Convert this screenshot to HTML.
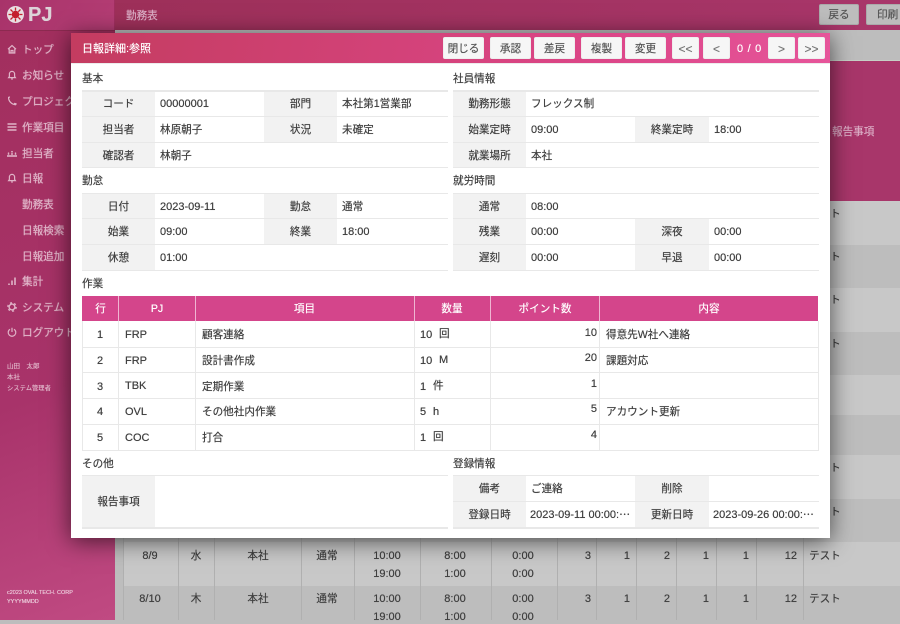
<!DOCTYPE html>
<html lang="ja"><head><meta charset="utf-8"><title>日報詳細</title>
<style>
html,body{margin:0;padding:0}
body{width:900px;height:620px;overflow:hidden;position:relative;background:#bdbdbd;font-family:"Liberation Sans","Noto Sans CJK JP",sans-serif;font-size:10.6px;color:#404040;text-shadow:0 0 .4px currentColor}
div,span{box-sizing:border-box}
.a{position:absolute;white-space:nowrap}
#top{left:0;top:0;width:900px;height:30px;background:linear-gradient(90deg,#9c2f57,#a8366a)}
#logo{left:0;top:0;width:115px;height:30px;background:linear-gradient(120deg,#a8336a,#b43d74);border-right:1px solid #a02f5f}
#side{left:0;top:30px;width:115px;height:590px;background:linear-gradient(160deg,#a22f5e 0%,#a8336a 60%,#c04a82 100%);border-top:1px solid #8c2a50}
.m{left:22px;height:14px;line-height:14px;color:#e0b4c8;font-size:10.6px;margin-top:1px;text-shadow:0 0 .7px currentColor}
.ic{position:absolute;left:7px;width:10px;height:10px;fill:none;stroke:#e0b4c8;stroke-width:1.2}
.tb{background:#bdbdbd;border:1px solid #aaa;border-radius:2px;color:#555;text-align:center;top:4px;height:21px;line-height:20px;font-size:10.6px}
.bar{background:#bdbdbd;left:115px;top:30px;width:785px;height:31px;border-bottom:1px solid #c6d0c6}
.ph{left:115px;top:61px;width:785px;height:141px;background:#a8366a;border-bottom:1px solid #c9c9c9}
.rw{left:124px;width:776px}
.li{background:#c8c8c8}.dk{background:#bdbdbd}
.vl{width:1px;top:499px;height:121px;background:#b0b0b0}
.t{line-height:14px;height:14px;color:#404040;margin-top:1px}
.n{font-size:11px}
.cn{text-align:center;transform:translateX(-50%)}
.rt{text-align:right;transform:translateX(-100%)}
#modal{left:71px;top:33px;width:759px;height:505px;background:#fff;box-shadow:0 3px 22px rgba(0,0,0,.62)}
#mh{left:71px;top:33px;width:759px;height:31px;background:linear-gradient(100deg,#c43c60,#dc4688 70%,#e6559a);border-bottom:1px solid #ececec;color:#fff}
.b{top:37px;height:22px;line-height:22px;background:#f6f6f6;border:1px solid #eee;border-radius:2px;text-align:center;color:#555;font-size:10.6px}
.ar{font-size:12px;color:#777}
.sec{height:14px;line-height:14px;color:#404040;margin-top:1px}
.hl{height:1px;background:#e8e8e8;width:366px}
.lb{background:#f2f2f2;text-align:center;color:#404040;padding-top:1px}
.vv{padding-left:5px;padding-top:1px;color:#404040}
.cell{overflow:hidden}
.th{background:#d4458b;color:#fff;text-align:center;top:296px;height:25px;line-height:25px;padding-top:1px}
.tv{width:1px;background:#e8e8e8;top:321px;height:130px}
.th2{width:1px;background:#efb6d2;top:296px;height:25px}
.tl{height:1px;background:#e8e8e8;left:82px;width:737px}
</style></head><body>
<div class="a" id="top"></div>
<div class="a bar"></div>
<div class="a ph"></div>
<div class="a" style="left:832px;top:125px;height:14px;line-height:14px;color:#dcaec6">報告事項</div>
<div class="a" id="side"></div>
<div class="a" id="logo"></div>
<svg class="a" style="left:6px;top:5px" width="19" height="19" viewBox="0 0 19 19"><circle cx="9.5" cy="9.5" r="8.5" fill="#e8dfe2"/><circle cx="9.5" cy="9.5" r="3.8" fill="#c4202c"/><g stroke="#c4202c" stroke-width="1.3"><path d="M9.5 2.5v3M9.5 13.5v3M2.5 9.5h3M13.5 9.5h3M4.5 4.5l2.2 2.2M12.3 12.3l2.2 2.2M14.5 4.5l-2.2 2.2M6.7 12.3l-2.2 2.2"/></g></svg>
<div class="a" style="left:28px;top:3px;height:24px;line-height:24px;font-size:20px;font-weight:bold;color:#dcd3d8">PJ</div>
<div class="a" style="left:126px;top:9px;height:14px;line-height:14px;color:#dcaec6">勤務表</div>
<div class="a tb" style="left:819px;width:40px">戻る</div>
<div class="a tb" style="left:866px;width:44px;text-align:left;padding-left:10px">印刷</div>

<!-- sidebar -->
<svg class="ic" style="top:44px" viewBox="0 0 10 10"><path d="M1 5.2L5 1.6l4 3.6M2.2 4.6V9h5.6V4.6M4 9V6.5h2V9"/></svg>
<div class="a m" style="top:42px">トップ</div>
<svg class="ic" style="top:70px" viewBox="0 0 10 10"><path d="M1.6 7.6h6.8L7.600 6.400V4a2.600 2.600 0 0 0-5.200 0v2.400zM4.200 9h1.600"/></svg>
<div class="a m" style="top:68px">お知らせ</div>
<svg class="ic" style="top:96px" viewBox="0 0 10 10"><path d="M1.600 1c-.4 4 3 7.600 7.400 7.800M1.600 1l1.400.2M7 7.400l2 .4v1"/></svg>
<div class="a m" style="top:94px">プロジェク</div>
<svg class="ic" style="top:122px;stroke-width:1.500" viewBox="0 0 10 10"><path d="M.5 2h9M.5 5h9M.5 8h9"/></svg>
<div class="a m" style="top:120px">作業項目</div>
<svg class="ic" style="top:148px" viewBox="0 0 10 10"><circle cx="1.500" cy="5.200" r=".8" fill="#e0b4c8" stroke="none"/><circle cx="5" cy="3.800" r=".9" fill="#e0b4c8" stroke="none"/><circle cx="8.500" cy="5.200" r=".8" fill="#e0b4c8" stroke="none"/><path d="M0 8h10" stroke-width="1.600"/><path d="M1.500 7V6.200M5 7V5M8.500 7V6.200" stroke-width="1.400"/></svg>
<div class="a m" style="top:146px">担当者</div>
<svg class="ic" style="top:173px" viewBox="0 0 10 10"><path d="M1.600 7.600h6.800L7.600 6.400V4a2.600 2.600 0 0 0-5.200 0v2.400zM4.200 9h1.600"/></svg>
<div class="a m" style="top:171px">日報</div>
<div class="a m" style="top:197px">勤務表</div>
<div class="a m" style="top:223px">日報検索</div>
<div class="a m" style="top:249px">日報追加</div>
<svg class="ic" style="top:276px;stroke-width:1.600" viewBox="0 0 10 10"><path d="M2 9V7.500M5 9V4.500M8 9V1.500"/></svg>
<div class="a m" style="top:274px">集計</div>
<svg class="ic" style="top:302px" viewBox="0 0 10 10"><circle cx="5" cy="5" r="2.900" stroke-width="1.400"/><circle cx="5" cy="5" r="4.200" stroke-width="1.300" stroke-dasharray="2 2.400"/></svg>
<div class="a m" style="top:300px">システム</div>
<svg class="ic" style="top:327px" viewBox="0 0 10 10"><path d="M3 2.200a3.800 3.800 0 1 0 4 0M5 .8V5"/></svg>
<div class="a m" style="top:325px">ログアウト</div>
<div class="a" style="left:7px;top:363px;font-size:6.500px;line-height:8px;color:#e0b4c8">山田　太郎</div>
<div class="a" style="left:7px;top:374px;font-size:6.500px;line-height:8px;color:#e0b4c8">本社</div>
<div class="a" style="left:7px;top:385px;font-size:6.300px;line-height:8px;color:#e0b4c8">システム管理者</div>
<div class="a" style="left:7px;top:589px;font-size:5.500px;line-height:8px;color:#eccbdb">c2023 OVAL TECH. CORP</div>
<div class="a" style="left:7px;top:598px;font-size:5.500px;line-height:8px;color:#eccbdb">YYYYMMDD</div>

<!-- background rows -->
<div class="a rw li" style="top:202px;height:43px;left:830px;width:70px"></div>
<div class="a rw dk" style="top:245px;height:43px;left:830px;width:70px"></div>
<div class="a rw li" style="top:288px;height:44px;left:830px;width:70px"></div>
<div class="a rw dk" style="top:332px;height:43px;left:830px;width:70px"></div>
<div class="a rw li" style="top:375px;height:40px;left:830px;width:70px"></div>
<div class="a rw dk" style="top:415px;height:40px;left:830px;width:70px"></div>
<div class="a rw li" style="top:455px;height:44px;left:830px;width:70px"></div>
<div class="a rw dk" style="top:499px;height:43px"></div>
<div class="a rw li" style="top:542px;height:44px"></div>
<div class="a rw dk" style="top:586px;height:34px"></div>
<div class="a vl" style="left:123px"></div><div class="a vl" style="left:178px"></div><div class="a vl" style="left:214px"></div><div class="a vl" style="left:301px"></div><div class="a vl" style="left:354px"></div><div class="a vl" style="left:420px"></div><div class="a vl" style="left:491px"></div><div class="a vl" style="left:557px"></div><div class="a vl" style="left:596px"></div><div class="a vl" style="left:636px"></div><div class="a vl" style="left:676px"></div><div class="a vl" style="left:716px"></div><div class="a vl" style="left:756px"></div><div class="a vl" style="left:803px"></div>

<div class="a t" style="left:809px;top:206px">テスト</div>
<div class="a t" style="left:809px;top:249px">テスト</div>
<div class="a t" style="left:809px;top:292px">テスト</div>
<div class="a t" style="left:809px;top:336px">テスト</div>
<div class="a t" style="left:809px;top:460px">テスト</div>
<div class="a t" style="left:809px;top:504px">テスト</div>

<div class="a t n cn" style="left:150px;top:548px">8/9</div><div class="a t cn" style="left:196px;top:548px">水</div><div class="a t cn" style="left:258px;top:548px">本社</div><div class="a t cn" style="left:327px;top:548px">通常</div>
<div class="a t n cn" style="left:387px;top:548px">10:00</div><div class="a t n cn" style="left:387px;top:566px">19:00</div><div class="a t n cn" style="left:455px;top:548px">8:00</div><div class="a t n cn" style="left:455px;top:566px">1:00</div><div class="a t n cn" style="left:523px;top:548px">0:00</div><div class="a t n cn" style="left:523px;top:566px">0:00</div>
<div class="a t n rt" style="left:591px;top:548px">3</div><div class="a t n rt" style="left:630px;top:548px">1</div><div class="a t n rt" style="left:670px;top:548px">2</div><div class="a t n rt" style="left:709px;top:548px">1</div><div class="a t n rt" style="left:749px;top:548px">1</div><div class="a t n rt" style="left:797px;top:548px">12</div><div class="a t" style="left:809px;top:548px">テスト</div>
<div class="a t n cn" style="left:150px;top:591px">8/10</div><div class="a t cn" style="left:196px;top:591px">木</div><div class="a t cn" style="left:258px;top:591px">本社</div><div class="a t cn" style="left:327px;top:591px">通常</div>
<div class="a t n cn" style="left:387px;top:591px">10:00</div><div class="a t n cn" style="left:387px;top:609px">19:00</div><div class="a t n cn" style="left:455px;top:591px">8:00</div><div class="a t n cn" style="left:455px;top:609px">1:00</div><div class="a t n cn" style="left:523px;top:591px">0:00</div><div class="a t n cn" style="left:523px;top:609px">0:00</div>
<div class="a t n rt" style="left:591px;top:591px">3</div><div class="a t n rt" style="left:630px;top:591px">1</div><div class="a t n rt" style="left:670px;top:591px">2</div><div class="a t n rt" style="left:709px;top:591px">1</div><div class="a t n rt" style="left:749px;top:591px">1</div><div class="a t n rt" style="left:797px;top:591px">12</div><div class="a t" style="left:809px;top:591px">テスト</div>

<!-- modal -->
<div class="a" id="modal"></div>
<div class="a" id="mh"></div>
<div class="a" style="left:82px;top:42px;height:14px;line-height:14px;color:#fff;font-size:11px">日報詳細:参照</div>
<div class="a b" style="left:443px;width:41px">閉じる</div>
<div class="a b" style="left:490px;width:41px">承認</div>
<div class="a b" style="left:534px;width:41px">差戻</div>
<div class="a b" style="left:581px;width:41px">複製</div>
<div class="a b" style="left:625px;width:41px">変更</div>
<div class="a b ar" style="left:672px;width:27px">&lt;&lt;</div>
<div class="a b ar" style="left:703px;width:27px">&lt;</div>
<div class="a n" style="left:737px;top:42px;height:14px;line-height:14px;color:#fff;letter-spacing:.7px">0 / 0</div>
<div class="a b ar" style="left:768px;width:27px">&gt;</div>
<div class="a b ar" style="left:798px;width:27px">&gt;&gt;</div>

<!-- left blocks -->
<div class="a sec" style="left:82px;top:71px">基本</div>
<div class="a lb" style="left:82px;top:91px;width:73px;height:25px;line-height:25px">コード</div><div class="a vv n" style="left:155px;top:91px;height:25px;line-height:25px">00000001</div><div class="a lb" style="left:264px;top:91px;width:73px;height:25px;line-height:25px">部門</div><div class="a vv" style="left:337px;top:91px;height:25px;line-height:25px">本社第1営業部</div>
<div class="a lb" style="left:82px;top:117px;width:73px;height:25px;line-height:25px">担当者</div><div class="a vv" style="left:155px;top:117px;height:25px;line-height:25px">林原朝子</div><div class="a lb" style="left:264px;top:117px;width:73px;height:25px;line-height:25px">状況</div><div class="a vv" style="left:337px;top:117px;height:25px;line-height:25px">未確定</div>
<div class="a lb" style="left:82px;top:143px;width:73px;height:24px;line-height:24px">確認者</div><div class="a vv" style="left:155px;top:143px;height:24px;line-height:24px">林朝子</div>
<div class="a hl" style="left:82px;top:90px;height:2px"></div><div class="a hl" style="left:82px;top:116px"></div><div class="a hl" style="left:82px;top:142px"></div><div class="a hl" style="left:82px;top:167px"></div>

<div class="a sec" style="left:82px;top:173px">勤怠</div>
<div class="a lb" style="left:82px;top:194px;width:73px;height:24px;line-height:24px">日付</div><div class="a vv n" style="left:155px;top:194px;height:24px;line-height:24px">2023-09-11</div><div class="a lb" style="left:264px;top:194px;width:73px;height:24px;line-height:24px">勤怠</div><div class="a vv" style="left:337px;top:194px;height:24px;line-height:24px">通常</div>
<div class="a lb" style="left:82px;top:219px;width:73px;height:25px;line-height:25px">始業</div><div class="a vv n" style="left:155px;top:219px;height:25px;line-height:25px">09:00</div><div class="a lb" style="left:264px;top:219px;width:73px;height:25px;line-height:25px">終業</div><div class="a vv n" style="left:337px;top:219px;height:25px;line-height:25px">18:00</div>
<div class="a lb" style="left:82px;top:245px;width:73px;height:25px;line-height:25px">休憩</div><div class="a vv n" style="left:155px;top:245px;height:25px;line-height:25px">01:00</div>
<div class="a hl" style="left:82px;top:193px"></div><div class="a hl" style="left:82px;top:218px"></div><div class="a hl" style="left:82px;top:244px"></div><div class="a hl" style="left:82px;top:270px"></div>

<!-- right blocks -->
<div class="a sec" style="left:453px;top:71px">社員情報</div>
<div class="a lb" style="left:453px;top:91px;width:73px;height:25px;line-height:25px">勤務形態</div><div class="a vv" style="left:526px;top:91px;height:25px;line-height:25px">フレックス制</div>
<div class="a lb" style="left:453px;top:117px;width:73px;height:25px;line-height:25px">始業定時</div><div class="a vv n" style="left:526px;top:117px;height:25px;line-height:25px">09:00</div><div class="a lb" style="left:635px;top:117px;width:74px;height:25px;line-height:25px">終業定時</div><div class="a vv n" style="left:709px;top:117px;height:25px;line-height:25px">18:00</div>
<div class="a lb" style="left:453px;top:143px;width:73px;height:24px;line-height:24px">就業場所</div><div class="a vv" style="left:526px;top:143px;height:24px;line-height:24px">本社</div>
<div class="a hl" style="left:453px;top:90px;height:2px"></div><div class="a hl" style="left:453px;top:116px"></div><div class="a hl" style="left:453px;top:142px"></div><div class="a hl" style="left:453px;top:167px"></div>

<div class="a sec" style="left:453px;top:173px">就労時間</div>
<div class="a lb" style="left:453px;top:194px;width:73px;height:24px;line-height:24px">通常</div><div class="a vv n" style="left:526px;top:194px;height:24px;line-height:24px">08:00</div>
<div class="a lb" style="left:453px;top:219px;width:73px;height:25px;line-height:25px">残業</div><div class="a vv n" style="left:526px;top:219px;height:25px;line-height:25px">00:00</div><div class="a lb" style="left:635px;top:219px;width:74px;height:25px;line-height:25px">深夜</div><div class="a vv n" style="left:709px;top:219px;height:25px;line-height:25px">00:00</div>
<div class="a lb" style="left:453px;top:245px;width:73px;height:25px;line-height:25px">遅刻</div><div class="a vv n" style="left:526px;top:245px;height:25px;line-height:25px">00:00</div><div class="a lb" style="left:635px;top:245px;width:74px;height:25px;line-height:25px">早退</div><div class="a vv n" style="left:709px;top:245px;height:25px;line-height:25px">00:00</div>
<div class="a hl" style="left:453px;top:193px"></div><div class="a hl" style="left:453px;top:218px"></div><div class="a hl" style="left:453px;top:244px"></div><div class="a hl" style="left:453px;top:270px"></div>

<!-- work table -->
<div class="a sec" style="left:82px;top:276px">作業</div>
<div class="a th" style="left:82px;width:37px">行</div>
<div class="a th" style="left:119px;width:76px">PJ</div>
<div class="a th" style="left:195px;width:219px">項目</div>
<div class="a th" style="left:414px;width:76px">数量</div>
<div class="a th" style="left:490px;width:110px">ポイント数</div>
<div class="a th" style="left:600px;width:218px">内容</div>
<div class="a th2" style="left:118px"></div><div class="a th2" style="left:195px"></div><div class="a th2" style="left:414px"></div><div class="a th2" style="left:490px"></div><div class="a th2" style="left:599px"></div>
<div class="a tv" style="left:82px"></div><div class="a tv" style="left:118px"></div><div class="a tv" style="left:195px"></div><div class="a tv" style="left:414px"></div><div class="a tv" style="left:490px"></div><div class="a tv" style="left:599px"></div><div class="a tv" style="left:818px"></div>
<div class="a tl" style="top:347px"></div><div class="a tl" style="top:372px"></div><div class="a tl" style="top:398px"></div><div class="a tl" style="top:424px"></div><div class="a tl" style="top:450px"></div>

<div class="a t n cn" style="left:100px;top:327px">1</div><div class="a t n" style="left:125px;top:327px">FRP</div><div class="a t" style="left:202px;top:327px">顧客連絡</div><div class="a t n" style="left:420px;top:327px">10</div><div class="a t" style="left:439px;top:326px">回</div><div class="a t n rt" style="left:597px;top:325px">10</div><div class="a t" style="left:606px;top:327px">得意先W社へ連絡</div>
<div class="a t n cn" style="left:100px;top:353px">2</div><div class="a t n" style="left:125px;top:353px">FRP</div><div class="a t" style="left:202px;top:353px">設計書作成</div><div class="a t n" style="left:420px;top:353px">10</div><div class="a t n" style="left:439px;top:352px">M</div><div class="a t n rt" style="left:597px;top:350px">20</div><div class="a t" style="left:606px;top:353px">課題対応</div>
<div class="a t n cn" style="left:100px;top:379px">3</div><div class="a t n" style="left:125px;top:378px">TBK</div><div class="a t" style="left:202px;top:379px">定期作業</div><div class="a t n" style="left:420px;top:379px">1</div><div class="a t" style="left:433px;top:378px">件</div><div class="a t n rt" style="left:597px;top:376px">1</div>
<div class="a t n cn" style="left:100px;top:404px">4</div><div class="a t n" style="left:125px;top:404px">OVL</div><div class="a t" style="left:202px;top:404px">その他社内作業</div><div class="a t n" style="left:420px;top:404px">5</div><div class="a t n" style="left:433px;top:404px">h</div><div class="a t n rt" style="left:597px;top:401px">5</div><div class="a t" style="left:606px;top:404px">アカウント更新</div>
<div class="a t n cn" style="left:100px;top:430px">5</div><div class="a t n" style="left:125px;top:430px">COC</div><div class="a t" style="left:202px;top:430px">打合</div><div class="a t n" style="left:420px;top:430px">1</div><div class="a t" style="left:433px;top:429px">回</div><div class="a t n rt" style="left:597px;top:427px">4</div>

<!-- other -->
<div class="a sec" style="left:82px;top:456px">その他</div>
<div class="a lb" style="left:82px;top:476px;width:73px;height:51px;line-height:51px">報告事項</div>
<div class="a hl" style="left:82px;top:475px"></div><div class="a hl" style="left:82px;top:527px;height:2px"></div>

<div class="a sec" style="left:453px;top:456px">登録情報</div>
<div class="a lb" style="left:453px;top:476px;width:73px;height:25px;line-height:25px">備考</div><div class="a vv" style="left:526px;top:476px;height:25px;line-height:25px">ご連絡</div><div class="a lb" style="left:635px;top:476px;width:74px;height:25px;line-height:25px">削除</div>
<div class="a lb" style="left:453px;top:502px;width:73px;height:25px;line-height:25px">登録日時</div><div class="a vv n cell" style="left:525px;top:502px;width:110px;height:25px;line-height:25px">2023-09-11 00:00:⋯</div><div class="a lb" style="left:635px;top:502px;width:74px;height:25px;line-height:25px">更新日時</div><div class="a vv n cell" style="left:708px;top:502px;width:111px;height:25px;line-height:25px">2023-09-26 00:00:⋯</div>
<div class="a hl" style="left:453px;top:475px"></div><div class="a hl" style="left:453px;top:501px"></div><div class="a hl" style="left:453px;top:527px;height:2px"></div>
</body></html>
